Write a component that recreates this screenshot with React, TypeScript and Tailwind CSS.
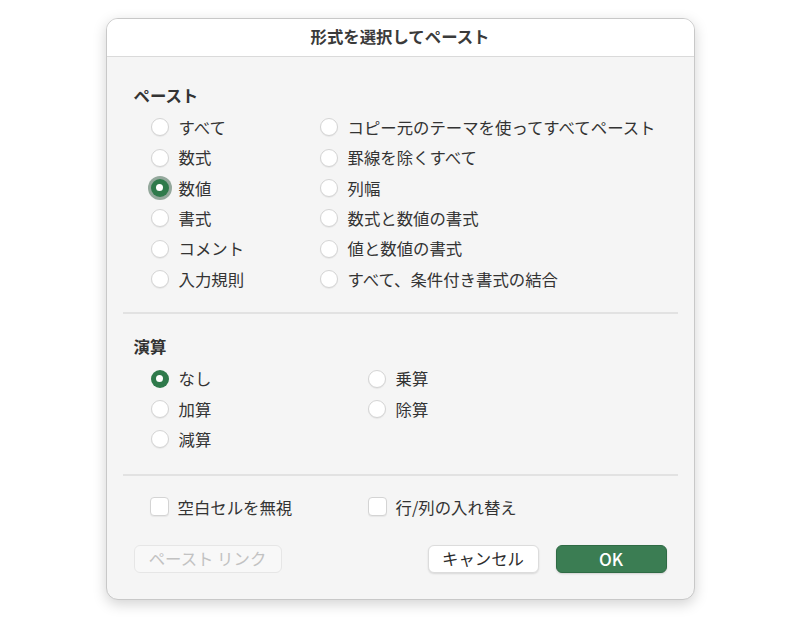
import React, { useState } from 'react';

const pasteLeft = ['すべて', '数式', '数値', '書式', 'コメント', '入力規則'];
const pasteRight = [
  'コピー元のテーマを使ってすべてペースト',
  '罫線を除くすべて',
  '列幅',
  '数式と数値の書式',
  '値と数値の書式',
  'すべて、条件付き書式の結合',
];
const opLeft = ['なし', '加算', '減算'];
const opRight = ['乗算', '除算'];

function Radio({ label, checked, focused, onClick }: { label: string; checked: boolean; focused?: boolean; onClick: () => void }) {
  return (
    <button onClick={onClick} className="flex items-center h-[30.4px] text-left cursor-default">
      <span
        className={`w-[18px] h-[18px] rounded-full flex items-center justify-center shrink-0 ${
          checked
            ? 'bg-[#2f7a4b]'
            : 'bg-white border border-[#d4d4d4] shadow-[0_1px_1px_rgba(0,0,0,0.06)]'
        } ${focused ? 'ring-[3px] ring-[#94a89c]' : ''}`}
      >
        {checked && <span className="w-[7px] h-[7px] rounded-full bg-white" />}
      </span>
      <span className="ml-[10px] whitespace-nowrap">{label}</span>
    </button>
  );
}

function Check({ label }: { label: string }) {
  const [on, setOn] = useState(false);
  return (
    <button onClick={() => setOn(!on)} className="flex items-center cursor-default">
      <span className="w-[19px] h-[19px] rounded-[4px] bg-white border border-[#d4d4d4] shadow-[0_1px_1px_rgba(0,0,0,0.06)] flex items-center justify-center">
        {on && <span className="text-[12px] text-[#2f7a4b]">✓</span>}
      </span>
      <span className="ml-[9px] whitespace-nowrap">{label}</span>
    </button>
  );
}

export default function App() {
  const [paste, setPaste] = useState('数値');
  const [op, setOp] = useState('なし');

  return (
    <div
      className="w-full h-[619px] bg-white flex justify-center pt-[18px] text-[#333] text-[16.4px]"
      style={{ fontFamily: '"Noto Sans CJK JP", "Noto Sans", sans-serif' }}
    >
      <div className="w-[589px] h-[582px] rounded-[12px] bg-[#f5f5f5] border border-[#c8c8c8] shadow-[0_4px_14px_rgba(0,0,0,0.18)] overflow-hidden flex flex-col">
        <div className="h-[38px] bg-white border-b border-[#dadada] flex items-center justify-center pb-[3px] font-bold leading-none text-[16.4px] text-[#3a3a3a]">
          形式を選択してペースト
        </div>

        <div className="flex flex-col px-[16px]">
          <div className="px-[11px] pt-[27px]">
            <div className="font-bold leading-[22px]">ペースト</div>
            <div className="flex pl-[17px] mt-[6px]">
              <div className="w-[169px] flex flex-col">
                {pasteLeft.map((l) => (
                  <Radio key={l} label={l} checked={paste === l} focused={l === '数値'} onClick={() => setPaste(l)} />
                ))}
              </div>
              <div className="flex flex-col">
                {pasteRight.map((l) => (
                  <Radio key={l} label={l} checked={paste === l} onClick={() => setPaste(l)} />
                ))}
              </div>
            </div>
          </div>

          <div className="h-[2px] bg-[#e2e2e2] mt-[18px]" />

          <div className="px-[11px] pt-[21px]">
            <div className="font-bold leading-[22px]">演算</div>
            <div className="flex pl-[17px] mt-[6px]">
              <div className="w-[217px] flex flex-col">
                {opLeft.map((l) => (
                  <Radio key={l} label={l} checked={op === l} onClick={() => setOp(l)} />
                ))}
              </div>
              <div className="flex flex-col">
                {opRight.map((l) => (
                  <Radio key={l} label={l} checked={op === l} onClick={() => setOp(l)} />
                ))}
              </div>
            </div>
          </div>

          <div className="h-[2px] bg-[#e2e2e2] mt-[19px]" />

          <div className="flex items-start pl-[27px] pt-[19px] h-[60px]">
            <div className="w-[218px] flex">
              <Check label="空白セルを無視" />
            </div>
            <Check label="行/列の入れ替え" />
          </div>

          <div className="flex items-center px-[11px] pt-[9px]">
            <button
              disabled
              className="w-[148px] h-[28px] rounded-[6px] bg-[#f8f8f8] border border-[#e6e6e6] text-[#c2c2c2]"
            >
              ペースト リンク
            </button>
            <div className="flex-1" />
            <button className="w-[111px] h-[28px] rounded-[6px] bg-white border border-[#dcdcdc] shadow-[0_1px_2px_rgba(0,0,0,0.12)] text-[#2c2c2c]">
              キャンセル
            </button>
            <button className="ml-[17px] w-[111px] h-[28px] rounded-[6px] bg-[#3b7d53] border border-[#2f6b45] text-white font-medium text-[17px] shadow-[0_1px_2px_rgba(0,0,0,0.15)]">
              OK
            </button>
          </div>
        </div>
      </div>
    </div>
  );
}
